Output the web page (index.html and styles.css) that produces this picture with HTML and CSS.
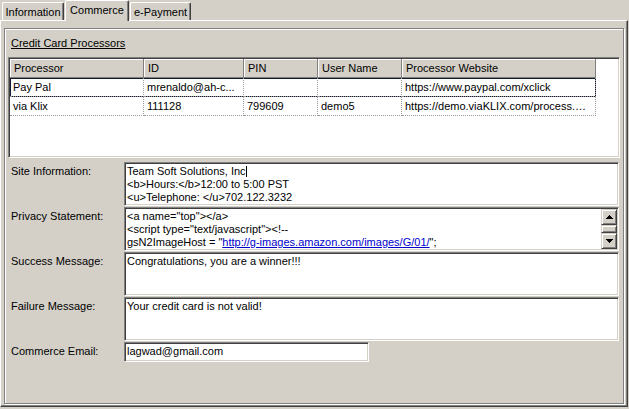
FILE: index.html
```html
<!DOCTYPE html>
<html lang="en">
<head>
    <meta charset="UTF-8">
    <title>Commerce</title>
    <link rel="stylesheet" href="styles.css">
</head>
<body>
    <div class="window">
        <div class="tabs">
            <div class="tab">Information</div>
            <div class="tab selected">Commerce</div>
            <div class="tab">e-Payment</div>
        </div>

        <div class="page">
            <div class="group">
                <div class="group-title">Credit Card Processors</div>

                <div class="grid">
                    <div class="grid-row header">
                        <div class="cell">Processor</div>
                        <div class="cell">ID</div>
                        <div class="cell">PIN</div>
                        <div class="cell">User Name</div>
                        <div class="cell">Processor Website</div>
                    </div>
                    <div class="grid-row focused">
                        <div class="cell">Pay Pal</div>
                        <div class="cell">mrenaldo@ah-c...</div>
                        <div class="cell"></div>
                        <div class="cell"></div>
                        <div class="cell">https://www.paypal.com/xclick</div>
                    </div>
                    <div class="grid-row">
                        <div class="cell">via Klix</div>
                        <div class="cell">111128</div>
                        <div class="cell">799609</div>
                        <div class="cell">demo5</div>
                        <div class="cell">https://demo.viaKLIX.com/process.…</div>
                    </div>
                </div>

                <div class="form">
                    <label>Site Information:</label>
                    <div class="textbox">
                        <div class="text">
                            Team Soft Solutions, Inc<span class="caret"></span><br>
                            &lt;b&gt;Hours:&lt;/b&gt;12:00 to 5:00 PST<br>
                            &lt;u&gt;Telephone: &lt;/u&gt;702.122.3232
                        </div>
                    </div>

                    <label>Privacy Statement:</label>
                    <div class="textbox">
                        <div class="text">
                            &lt;a name="top"&gt;&lt;/a&gt;<br>
                            &lt;script type="text/javascript"&gt;&lt;!--<br>
                            gsN2ImageHost = "<span class="link">http://g-images.amazon.com/images/G/01/</span>";
                        </div>
                        <div class="scrollbar">
                            <div class="sb-button">
                                <svg width="7" height="4" viewBox="0 0 7 4"><path d="M3 0h1v1h-1zM2 1h3v1h-3zM1 2h5v1h-5zM0 3h7v1h-7z" fill="#000"/></svg>
                            </div>
                            <div class="sb-thumb"></div>
                            <div class="sb-button">
                                <svg width="7" height="4" viewBox="0 0 7 4"><path d="M0 0h7v1h-7zM1 1h5v1h-5zM2 2h3v1h-3zM3 3h1v1h-1z" fill="#000"/></svg>
                            </div>
                        </div>
                    </div>

                    <label>Success Message:</label>
                    <div class="textbox">
                        <div class="text">Congratulations, you are a winner!!!</div>
                    </div>

                    <label>Failure Message:</label>
                    <div class="textbox">
                        <div class="text">Your credit card is not valid!</div>
                    </div>

                    <label>Commerce Email:</label>
                    <div class="textbox email">
                        <div class="text">lagwad@gmail.com</div>
                    </div>
                </div>
            </div>
        </div>
    </div>
</body>
</html>
```

FILE: styles.css
```css
body {
    margin: 0;
    background-color: #d4d0c8;
    font-family: "Liberation Sans", Arial, sans-serif;
    font-size: 11px;
    color: #000;
}
.window {
    width: 629px;
    height: 409px;
}

/* tab strip */
.tabs {
    display: flex;
    align-items: flex-end;
    height: 20px;
    padding-left: 2px;
}
.tab {
    box-sizing: border-box;
    height: 18px;
    padding-top: 3px;
    line-height: 13px;
    text-align: center;
    border-top: 1px solid #fff;
    border-left: 1px solid #fff;
    border-right: 1px solid #404040;
    box-shadow: inset -1px 0 #808080;
    border-radius: 2px 2px 0 0;
}
.tab:nth-child(1) {
    width: 62px;
}
.tab:nth-child(2) {
    width: 64px;
    margin-left: 1px;
}
.tab:nth-child(3) {
    width: 61px;
    margin-left: 1px;
}
.tab.selected {
    height: 21px;
    margin-bottom: -1px;
    background-color: #d4d0c8;
    position: relative;
    z-index: 1;
}

/* tab page */
.page {
    box-sizing: border-box;
    width: 628px;
    height: 387px;
    padding: 7px 3px 2px 3px;
    border-top: 1px solid #fff;
    border-left: 1px solid #fff;
    border-right: 1px solid #404040;
    border-bottom: 1px solid #404040;
    box-shadow: inset -1px -1px #808080;
}
.group {
    box-sizing: border-box;
    height: 376px;
    padding: 8px 3px 0 3px;
    border: 1px solid #808080;
    box-shadow: inset 1px 1px #fff, 1px 1px #fff;
}
.group-title {
    padding-left: 3px;
    line-height: 13px;
    text-decoration: underline;
}

/* processors grid */
.grid {
    box-sizing: border-box;
    height: 101px;
    margin-top: 7px;
    background: #fff;
    border: 1px solid;
    border-color: #808080 #fff #fff #808080;
    box-shadow: inset 1px 1px #404040, inset -1px -1px #d4d0c8;
    padding: 1px;
}
.grid-row {
    display: grid;
    grid-template-columns: 134px 100px 74px 84px 194px;
    width: 586px;
    height: 19px;
}
.cell {
    box-sizing: border-box;
    padding-left: 3px;
    line-height: 18px;
    white-space: nowrap;
    overflow: hidden;
    border-right: 1px dotted #9a9a9a;
    border-bottom: 1px dotted #9a9a9a;
}
.header .cell {
    padding-left: 4px;
    background: #d4d0c8;
    border-right: 1px solid #808080;
    border-bottom: 1px solid #808080;
    box-shadow: inset 1px 1px #fff;
}
.focused {
    box-shadow: inset 0 0 0 1px #141c30;
}

/* fields */
.form {
    display: grid;
    grid-template-columns: 116px 495px;
    row-gap: 1px;
    margin-top: 4px;
}
.form label {
    padding: 3px 0 0 3px;
    line-height: 13px;
}
.textbox {
    box-sizing: border-box;
    display: flex;
    height: 44px;
    background: #fff;
    border: 1px solid;
    border-color: #808080 #fff #fff #808080;
    box-shadow: inset 1px 1px #404040, inset -1px -1px #d4d0c8;
    padding: 1px;
}
.textbox .text {
    flex: 1;
    padding: 1px 0 0 1px;
    line-height: 13px;
    white-space: nowrap;
    overflow: hidden;
}
.textbox.email {
    width: 245px;
    height: 20px;
}
.caret {
    display: inline-block;
    width: 1px;
    height: 11px;
    background: #000;
    vertical-align: -2px;
}
.link {
    color: #0000cc;
    text-decoration: underline;
}

/* scrollbar */
.scrollbar {
    display: flex;
    flex-direction: column;
    width: 16px;
}
.sb-button, .sb-thumb {
    box-sizing: border-box;
    background: #d4d0c8;
    border: 1px solid;
    border-color: #d4d0c8 #404040 #404040 #d4d0c8;
    box-shadow: inset 1px 1px #fff, inset -1px -1px #808080;
}
.sb-button {
    height: 16px;
    display: flex;
    align-items: center;
    justify-content: center;
}
.sb-thumb {
    height: 8px;
}
```
